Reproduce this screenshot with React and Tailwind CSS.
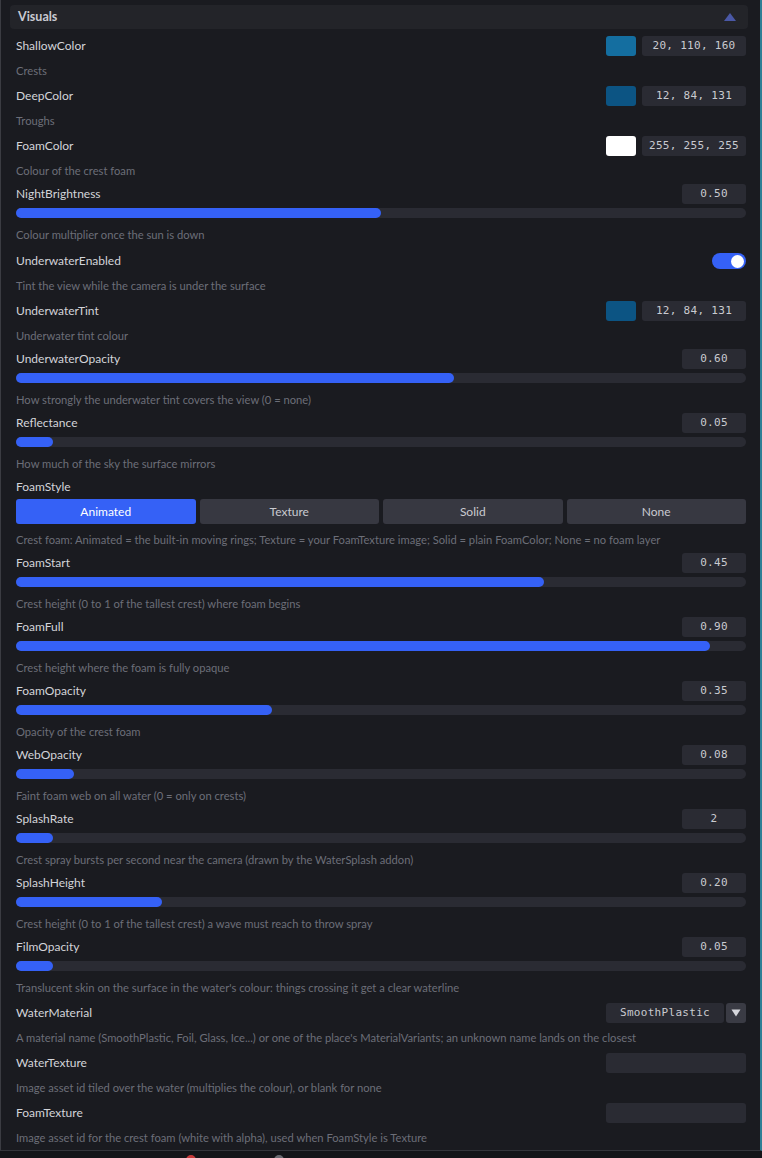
import React from 'react';

const SANS = { fontFamily: 'Lato, "Noto Sans", sans-serif' };
const MONO = { fontFamily: '"DejaVu Sans Mono", "Liberation Mono", monospace' };

const settings = [
  { kind: 'color', name: 'ShallowColor', rgb: [20, 110, 160], desc: 'Crests' },
  { kind: 'color', name: 'DeepColor', rgb: [12, 84, 131], desc: 'Troughs' },
  { kind: 'color', name: 'FoamColor', rgb: [255, 255, 255], desc: 'Colour of the crest foam' },
  { kind: 'slider', name: 'NightBrightness', value: '0.50', fill: 0.5, desc: 'Colour multiplier once the sun is down' },
  { kind: 'toggle', name: 'UnderwaterEnabled', on: true, desc: 'Tint the view while the camera is under the surface' },
  { kind: 'color', name: 'UnderwaterTint', rgb: [12, 84, 131], desc: 'Underwater tint colour' },
  { kind: 'slider', name: 'UnderwaterOpacity', value: '0.60', fill: 0.6, desc: 'How strongly the underwater tint covers the view (0 = none)' },
  { kind: 'slider', name: 'Reflectance', value: '0.05', fill: 0.05, desc: 'How much of the sky the surface mirrors' },
  {
    kind: 'choice',
    name: 'FoamStyle',
    options: ['Animated', 'Texture', 'Solid', 'None'],
    selected: 'Animated',
    desc: 'Crest foam: Animated = the built-in moving rings; Texture = your FoamTexture image; Solid = plain FoamColor; None = no foam layer',
  },
  { kind: 'slider', name: 'FoamStart', value: '0.45', fill: 0.723, desc: 'Crest height (0 to 1 of the tallest crest) where foam begins' },
  { kind: 'slider', name: 'FoamFull', value: '0.90', fill: 0.951, desc: 'Crest height where the foam is fully opaque' },
  { kind: 'slider', name: 'FoamOpacity', value: '0.35', fill: 0.351, desc: 'Opacity of the crest foam' },
  { kind: 'slider', name: 'WebOpacity', value: '0.08', fill: 0.08, desc: 'Faint foam web on all water (0 = only on crests)' },
  { kind: 'slider', name: 'SplashRate', value: '2', fill: 0.05, desc: 'Crest spray bursts per second near the camera (drawn by the WaterSplash addon)' },
  { kind: 'slider', name: 'SplashHeight', value: '0.20', fill: 0.2, desc: 'Crest height (0 to 1 of the tallest crest) a wave must reach to throw spray' },
  { kind: 'slider', name: 'FilmOpacity', value: '0.05', fill: 0.05, desc: "Translucent skin on the surface in the water's colour: things crossing it get a clear waterline" },
  {
    kind: 'select',
    name: 'WaterMaterial',
    value: 'SmoothPlastic',
    desc: "A material name (SmoothPlastic, Foil, Glass, Ice...) or one of the place's MaterialVariants; an unknown name lands on the closest",
  },
  { kind: 'text', name: 'WaterTexture', desc: 'Image asset id tiled over the water (multiplies the colour), or blank for none' },
  { kind: 'text', name: 'FoamTexture', desc: 'Image asset id for the crest foam (white with alpha), used when FoamStyle is Texture' },
];

const Label = ({ children }) => (
  <span className="text-[12px] text-[#d3d4d9]">{children}</span>
);

const Desc = ({ children, className = '' }) => (
  <p className={`text-[11.2px] leading-4 text-[#6c6e78] whitespace-nowrap ${className}`}>{children}</p>
);

const ValueBox = ({ children, className = '' }) => (
  <div
    className={`h-5 rounded-[3px] bg-[#2a2b33] flex items-center justify-center text-[11px] tracking-[0.3px] text-[#c9cad0] ${className}`}
    style={MONO}
  >
    {children}
  </div>
);

const ColorRow = ({ item }) => (
  <div className="flex items-center justify-between h-6">
    <Label>{item.name}</Label>
    <div className="flex items-center gap-[6px]">
      <div className="w-[30px] h-5 rounded-[3px]" style={{ backgroundColor: `rgb(${item.rgb.join(',')})` }} />
      <ValueBox className="w-[104px]">{item.rgb.join(', ')}</ValueBox>
    </div>
  </div>
);

const Toggle = ({ on }) => (
  <div className={`w-[34px] h-4 rounded-full flex items-center px-[2px] ${on ? 'bg-[#3561f6] justify-end' : 'bg-[#3a3b44] justify-start'}`}>
    <div className="w-[13px] h-[13px] rounded-full bg-white" />
  </div>
);

const Slider = ({ fill }) => (
  <div className="mt-1 h-[10px] rounded-full bg-[#2a2b33]">
    <div className="h-full rounded-full bg-[#3561f6]" style={{ width: `${fill * 100}%` }} />
  </div>
);

const Setting = ({ item }) => {
  if (item.kind === 'color') {
    return (
      <div>
        <ColorRow item={item} />
        <Desc className="mt-[5px]">{item.desc}</Desc>
      </div>
    );
  }
  if (item.kind === 'toggle') {
    return (
      <div className="pt-px">
        <div className="flex items-center justify-between h-6">
          <Label>{item.name}</Label>
          <Toggle on={item.on} />
        </div>
        <Desc className="mt-[5px]">{item.desc}</Desc>
      </div>
    );
  }
  if (item.kind === 'slider') {
    return (
      <div>
        <div className="flex items-center justify-between h-5">
          <Label>{item.name}</Label>
          <ValueBox className="w-[64px]">{item.value}</ValueBox>
        </div>
        <Slider fill={item.fill} />
        <Desc className="mt-[9px]">{item.desc}</Desc>
      </div>
    );
  }
  if (item.kind === 'choice') {
    return (
      <div>
        <div className="flex items-center h-5">
          <Label>{item.name}</Label>
        </div>
        <div className="mt-[2px] grid grid-cols-4 gap-1">
          {item.options.map((opt) => (
            <div
              key={opt}
              className={`h-[25px] rounded-[3px] flex items-center justify-center text-[12px] ${
                opt === item.selected ? 'bg-[#3561f6] text-white' : 'bg-[#373841] text-[#c9cad0]'
              }`}
            >
              {opt}
            </div>
          ))}
        </div>
        <Desc className="mt-2">{item.desc}</Desc>
      </div>
    );
  }
  if (item.kind === 'select') {
    return (
      <div>
        <div className="flex items-center justify-between h-6">
          <Label>{item.name}</Label>
          <div className="flex items-center gap-[2px]">
            <ValueBox className="w-[118px]">{item.value}</ValueBox>
            <div className="w-5 h-5 rounded-[3px] bg-[#3a3b44] flex items-center justify-center">
              <svg width="10" height="8" viewBox="0 0 10 8">
                <path d="M0.5 0.5h9L5 7.5z" fill="#d6d7dc" />
              </svg>
            </div>
          </div>
        </div>
        <Desc className="mt-[5px]">{item.desc}</Desc>
      </div>
    );
  }
  return (
    <div>
      <div className="flex items-center justify-between h-6">
        <Label>{item.name}</Label>
        <div className="w-[140px] h-5 rounded-[3px] bg-[#2a2b33]" />
      </div>
      <Desc className="mt-[5px]">{item.desc}</Desc>
    </div>
  );
};

export default function App() {
  return (
    <div className="w-[762px] h-[1158px] bg-[#141519] overflow-hidden flex flex-col" style={SANS}>
      <div className="h-[1151px] bg-[#1a1b20] border-l border-[#3b3c42] border-r-2 border-r-[#2f7f95] border-b border-b-[#34353b] pt-[5px] pl-[9px] pr-[12px]">
        <div className="h-6 rounded-[4px] bg-[#232429] flex items-center justify-between pl-2 pr-[12px]">
          <span className="text-[12.5px] font-bold text-[#c9cad2]">Visuals</span>
          <svg width="12" height="8" viewBox="0 0 12 8">
            <path d="M6 0L12 8H0z" fill="#4a58a6" />
          </svg>
        </div>
        <div className="mt-[5px] pl-[6px] pr-[2px] flex flex-col gap-[5px]">
          {settings.map((item) => (
            <Setting key={item.name} item={item} />
          ))}
        </div>
      </div>
      <div className="relative flex-1">
        <div className="absolute left-[186px] top-[4px] w-[10px] h-[10px] rounded-full bg-[#c83a3a]" />
        <div className="absolute left-[274px] top-[4px] w-[10px] h-[10px] rounded-full bg-[#6a6b72]" />
      </div>
    </div>
  );
}
